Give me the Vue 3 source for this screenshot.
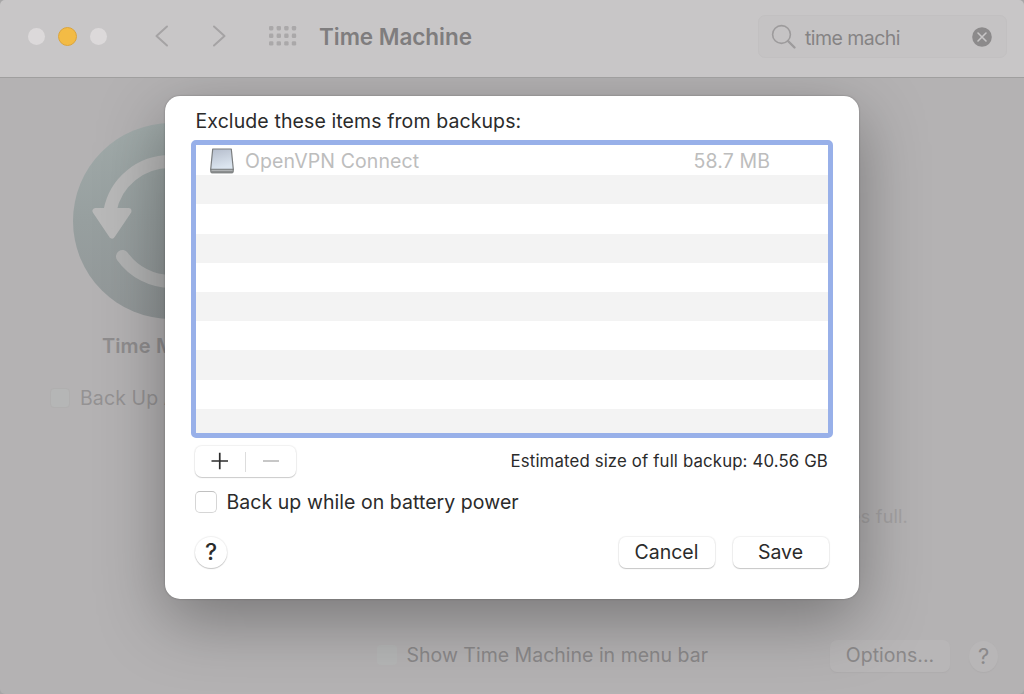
<script setup>
const item = { name: 'OpenVPN Connect', size: '58.7 MB' }
const dots = Array.from({ length: 12 }, (_, i) => ({ x: (i % 4) * 7.6, y: Math.floor(i / 4) * 7.6 }))
</script>

<template>
  <div class="window">
    <header class="toolbar">
      <div class="lights"><i></i><i class="yellow"></i><i></i></div>
      <svg class="nav" width="71" height="26" viewBox="0 0 71 26">
        <path d="M12 3.500 L1.500 13 L12 22.500 M59 3.500 L69.500 13 L59 22.500" />
      </svg>
      <svg class="grid" width="28" height="21" viewBox="0 0 28 21">
        <rect v-for="(d, i) in dots" :key="i" :x="d.x" :y="d.y" width="4.400" height="4.400" rx="1.300" />
      </svg>
      <h1>Time Machine</h1>
      <div class="search">
        <svg width="26" height="26" viewBox="0 0 26 26" fill="none">
          <circle cx="10.500" cy="10.500" r="8.900" stroke="#9d9b9c" stroke-width="1.600" />
          <path d="M17 17 L23.500 23.500" stroke="#9d9b9c" stroke-width="2.400" stroke-linecap="round" />
        </svg>
        <span>time machi</span>
        <svg width="20" height="20" viewBox="0 0 20 20">
          <circle cx="10" cy="10" r="9.800" fill="#8c8a8b" />
          <path d="M6 6 L14 14 M14 6 L6 14" stroke="#c8c6c7" stroke-width="1.600" stroke-linecap="round" />
        </svg>
      </div>
    </header>

    <main class="body">
      <section class="side">
        <svg class="logo" width="196" height="196" viewBox="0 0 196 196">
          <defs>
            <linearGradient id="disc" x1="0" y1="0" x2="0" y2="1">
              <stop offset="0" stop-color="#a1abaa" />
              <stop offset=".5" stop-color="#979f9f" />
              <stop offset="1" stop-color="#929798" />
            </linearGradient>
          </defs>
          <circle cx="98" cy="98" r="98" fill="url(#disc)" />
          <path d="M37 88 A61 60 0 0 1 98 38.500" fill="none" stroke="#b9b9b9" stroke-width="13" />
          <path d="M49.500 133.500 A60 60 0 0 0 98 158.500" fill="none" stroke="#b1b2b2" stroke-width="13" stroke-linecap="round" />
          <path d="M22.500 88 L55.500 88 L39 112.500 Z" fill="#b9b9b9" stroke="#b9b9b9" stroke-width="6" stroke-linejoin="round" />
        </svg>
        <h2>Time Machine</h2>
        <label class="auto"><i class="ghost-box"></i><span>Back Up Automatically</span></label>
      </section>
      <section class="details">
        <p>disk becomes full.</p>
        <footer>
          <label class="menubar"><i class="ghost-box"></i><span>Show Time Machine in menu bar</span></label>
          <button class="ghost options"><span>Options...</span></button>
          <button class="ghost round"><span>?</span></button>
        </footer>
      </section>

      <div class="sheet">
        <div class="caption"><span>Exclude these items from backups:</span></div>
        <div class="list">
          <div class="row">
            <svg width="24" height="26" viewBox="0 0 24 26">
              <defs>
                <linearGradient id="drive" x1="0" y1="0" x2="0.300" y2="1">
                  <stop offset="0" stop-color="#b4bccb" />
                  <stop offset="1" stop-color="#dce6f0" />
                </linearGradient>
              </defs>
              <path d="M.6 21 H23.400 V23.400 Q23.400 25 22 25 H2 Q.6 25 .6 23.400 Z" fill="#8b8e8f" stroke="#7a7d7e" stroke-width=".8" />
              <path d="M2.700 1 H21.300 L23.300 21.300 H.7 Z" fill="url(#drive)" stroke="#7a7d7f" stroke-width="1.200" stroke-linejoin="round" />
              <path d="M1.500 22.300 H22.500" stroke="#b9bdbe" stroke-width="1" />
            </svg>
            <span class="name">{{ item.name }}</span>
            <span class="size">{{ item.size }}</span>
          </div>
          <div v-for="n in 9" :key="n" class="row"></div>
        </div>
        <div class="under">
          <div class="segments">
            <svg width="51" height="32" viewBox="0 0 51 32"><path d="M16.500 15 H33 M24.750 6.800 V23.200" stroke="#2c2c2c" stroke-width="1.700" /></svg>
            <b></b>
            <svg width="50" height="32" viewBox="0 0 50 32"><path d="M17 15 H33" stroke="#b5b5b5" stroke-width="1.500" /></svg>
          </div>
          <span class="estimate">Estimated size of full backup: 40.56 GB</span>
        </div>
        <label class="battery"><i></i><span>Back up while on battery power</span></label>
        <div class="actions">
          <button class="help"><span>?</span></button>
          <button class="push cancel"><span>Cancel</span></button>
          <button class="push save"><span>Save</span></button>
        </div>
      </div>
    </main>
  </div>
</template>

<style>
html, body { margin: 0; background: #a7a6a7; overflow: hidden; }
</style>

<style scoped>
* { box-sizing: border-box; }
.window { width: 1024px; height: 694px; display: flex; flex-direction: column; overflow: hidden; border-radius: 5px; font-family: Inter, "Liberation Sans", sans-serif; font-size: 19.500px; color: #2b2b2b; white-space: nowrap; }
h1, h2, p { margin: 0; }
span, h1, h2 { line-height: 24px; }
button { padding: 0; border: 0; font: inherit; color: inherit; }
.toolbar { height: 78px; flex: none; display: flex; align-items: center; background: #c8c6c7; border-bottom: 1px solid #a09f9f; padding: 0 17px 4px 28px; }
.lights { display: flex; gap: 12px; align-items: center; width: 79px; flex: none; }
.lights i { width: 17px; height: 17px; border-radius: 50%; background: #dcd9da; }
.lights .yellow { width: 19px; height: 19px; margin: 0 1px 0 1px; background: #f3bb45; border: 1px solid #dca53c; }
.nav { margin-left: 48px; margin-top: -1px; flex: none; fill: none; stroke: #a5a3a4; stroke-width: 2; stroke-linecap: round; stroke-linejoin: round; }
.grid { margin-left: 42.500px; fill: #aaa8a9; flex: none; }
h1 { margin-left: 22.500px; width: 160px; font-size: 22.500px; font-weight: 600; color: #7f7d7e; letter-spacing: -.05px; }
.search { margin-left: auto; width: 249px; height: 43px; border-radius: 7px; background: #c5c3c4; border: 1px solid #c2c0c1; display: flex; align-items: center; padding: 0 14px 0 12px; color: #858384; }
.search span { margin-left: 8px; margin-top: 2px; flex: 1; letter-spacing: -.55px; }
.body { position: relative; flex: 1; display: flex; overflow: hidden; background: #b4b2b3; }
.side { width: 342px; flex: none; padding-top: 45px; display: flex; flex-direction: column; align-items: center; }
.logo { display: block; }
h2 { margin-top: 15px; font-size: 20px; font-weight: 600; color: #8f8d8e; letter-spacing: .15px; }
.auto { align-self: flex-start; margin-left: 50px; margin-top: 28px; display: flex; align-items: center; gap: 10px; color: #949293; }
.auto span { letter-spacing: .1px; }
.ghost-box { width: 20px; height: 20px; border-radius: 4px; background: #b5b6b6; flex: none; }
.auto .ghost-box { border: 1px solid #b0afaf; }
.details { flex: 1; display: flex; flex-direction: column; justify-content: flex-end; padding: 0 26px 22px 35px; }
.details p { align-self: flex-end; margin-right: 90px; margin-bottom: 111px; color: #a3a1a2; line-height: 24px; font-size: 18px; letter-spacing: .2px; }
.details footer { display: flex; align-items: center; }
.menubar { display: flex; align-items: center; gap: 9.500px; flex: 1; color: #8a8889; margin-top: -2px; }
.ghost { height: 32px; background: #b8b6b7; border-radius: 7px; color: #8b898a; box-shadow: 0 1px 1px #aeacad; }
.options { width: 120px; margin-right: 19px; }
.options span { position: relative; top: -1px; }
.round { width: 29px; height: 31px; border-radius: 50%; font-size: 22px; }
.sheet { position: absolute; left: 165px; top: 18px; width: 694px; height: 503px; border-radius: 15px; background: #fff; box-shadow: 0 0 2px rgba(0,0,0,.3), 0 20px 66px rgba(0,0,0,.34); padding: 13px 26px 0; }
.caption { height: 31px; padding-left: 4.500px; letter-spacing: .1px; }
.list { height: 298px; border: 5px solid #98b0e9; border-radius: 5px; overflow: hidden; padding-top: 1px; }
.row { height: 29.200px; display: flex; align-items: center; padding: 0 58px 0 14px; color: #bdbdbd; }
.row:nth-child(even) { background: #f3f3f3; }
.name { margin-left: 11px; flex: 1; letter-spacing: .1px; }
.size { letter-spacing: .1px; }
.under { height: 49px; padding: 8px 5px 0 4px; display: flex; justify-content: space-between; }
.segments { width: 101px; height: 31px; border-radius: 7px; display: flex; align-items: center; box-shadow: 0 0 1px 1px rgba(0,0,0,.06), 0 1px 1px rgba(0,0,0,.16); }
.segments b { height: 20px; width: 1px; background: #ddd; margin: 0 0 0 -1px; }
.estimate { font-size: 16.800px; margin-top: 3px; letter-spacing: .14px; }
.battery { display: flex; align-items: center; margin: 3px 0 0 4px; height: 24px; gap: 9.500px; letter-spacing: .05px; }
.battery i { width: 22px; height: 22px; border-radius: 5px; border: 1px solid #d6d6d6; border-top-color: #c0c0c0; flex: none; }
.actions { display: flex; align-items: center; height: 32px; margin: 22px 4px 0; }
.help, .push { background: #fff; box-shadow: 0 0 1px 1px rgba(0,0,0,.06), 0 1px 1px rgba(0,0,0,.18); }
.help { width: 32px; height: 31px; border-radius: 50%; font-size: 23px; font-weight: 500; margin-right: auto; }
.push { width: 96px; height: 31px; border-radius: 7px; }
.cancel { margin-right: 0; }
.save { margin-left: 18px; }
.push span { position: relative; left: -.5px; }
</style>
